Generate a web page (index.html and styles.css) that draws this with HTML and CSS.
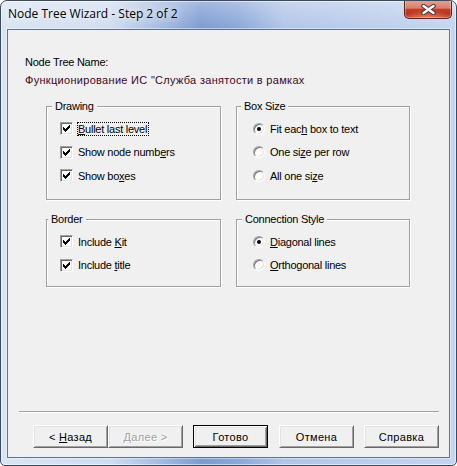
FILE: index.html
```html
<!DOCTYPE html>
<html>
<head>
<meta charset="utf-8">
<link rel="stylesheet" href="styles.css">
</head>
<body>
<div class="window">
  <div class="titlebar">
    <span class="title">Node Tree Wizard - Step 2 of 2</span>
    <div class="close">
      <svg width="15" height="11" viewBox="0 0 15 11">
        <path d="M2.5 2 L12.5 9 M12.5 2 L2.5 9" stroke="#3b3b3b" stroke-width="4.4" stroke-linecap="round" fill="none"/>
        <path d="M2.5 2 L12.5 9 M12.5 2 L2.5 9" stroke="#ffffff" stroke-width="2.4" stroke-linecap="round" fill="none"/>
      </svg>
    </div>
  </div>
  <div class="client">
    <div class="name-block">
      <div class="line">Node Tree Name:</div>
      <div class="line name-value cyr">Функционирование ИС "Служба занятости в рамках</div>
    </div>

    <div class="groups">
      <div class="group">
        <div class="legend lg-drawing">Drawing</div>
        <div class="opts">
          <div class="opt"><span class="cb"><svg width="11" height="11" viewBox="0 0 11 11"><path class="tick" d="M2 4 L3 4 L3 5 L4 5 L4 6 L5 6 L5 5 L6 5 L6 4 L7 4 L7 3 L8 3 L8 2 L9 2 L9 5 L8 5 L8 6 L7 6 L7 7 L6 7 L6 8 L5 8 L5 9 L4 9 L4 8 L3 8 L3 7 L2 7 Z"/></svg></span><span class="txt focus"><u>B</u>ullet last level</span></div>
          <div class="opt"><span class="cb"><svg width="11" height="11" viewBox="0 0 11 11"><path class="tick" d="M2 4 L3 4 L3 5 L4 5 L4 6 L5 6 L5 5 L6 5 L6 4 L7 4 L7 3 L8 3 L8 2 L9 2 L9 5 L8 5 L8 6 L7 6 L7 7 L6 7 L6 8 L5 8 L5 9 L4 9 L4 8 L3 8 L3 7 L2 7 Z"/></svg></span><span class="txt">Show node numb<u>e</u>rs</span></div>
          <div class="opt"><span class="cb"><svg width="11" height="11" viewBox="0 0 11 11"><path class="tick" d="M2 4 L3 4 L3 5 L4 5 L4 6 L5 6 L5 5 L6 5 L6 4 L7 4 L7 3 L8 3 L8 2 L9 2 L9 5 L8 5 L8 6 L7 6 L7 7 L6 7 L6 8 L5 8 L5 9 L4 9 L4 8 L3 8 L3 7 L2 7 Z"/></svg></span><span class="txt">Show bo<u>x</u>es</span></div>
        </div>
      </div>

      <div class="group radios">
        <div class="legend lg-box">Box Size</div>
        <div class="opts">
          <div class="opt"><span class="rb on"></span><span class="txt">Fit eac<u>h</u> box to text</span></div>
          <div class="opt"><span class="rb"></span><span class="txt">One si<u>z</u>e per row</span></div>
          <div class="opt"><span class="rb"></span><span class="txt">All one si<u>z</u>e</span></div>
        </div>
      </div>

      <div class="group">
        <div class="legend lg-border">Border</div>
        <div class="opts">
          <div class="opt"><span class="cb"><svg width="11" height="11" viewBox="0 0 11 11"><path class="tick" d="M2 4 L3 4 L3 5 L4 5 L4 6 L5 6 L5 5 L6 5 L6 4 L7 4 L7 3 L8 3 L8 2 L9 2 L9 5 L8 5 L8 6 L7 6 L7 7 L6 7 L6 8 L5 8 L5 9 L4 9 L4 8 L3 8 L3 7 L2 7 Z"/></svg></span><span class="txt">Include <u>K</u>it</span></div>
          <div class="opt"><span class="cb"><svg width="11" height="11" viewBox="0 0 11 11"><path class="tick" d="M2 4 L3 4 L3 5 L4 5 L4 6 L5 6 L5 5 L6 5 L6 4 L7 4 L7 3 L8 3 L8 2 L9 2 L9 5 L8 5 L8 6 L7 6 L7 7 L6 7 L6 8 L5 8 L5 9 L4 9 L4 8 L3 8 L3 7 L2 7 Z"/></svg></span><span class="txt">Include <u>t</u>itle</span></div>
        </div>
      </div>

      <div class="group radios">
        <div class="legend lg-conn">Connection Style</div>
        <div class="opts">
          <div class="opt"><span class="rb on"></span><span class="txt"><u>D</u>iagonal lines</span></div>
          <div class="opt"><span class="rb"></span><span class="txt"><u>O</u>rthogonal lines</span></div>
        </div>
      </div>
    </div>

    <div class="separator"></div>

    <div class="buttons cyr">
      <div class="btn">&lt;&nbsp;<u>Н</u>азад</div>
      <div class="btn disabled"><u>Д</u>алее&nbsp;&gt;</div>
      <div class="btn default gap-a">Готово</div>
      <div class="btn gap-b">Отмена</div>
      <div class="btn gap-a">Справка</div>
    </div>
  </div>
</div>
</body>
</html>
```

FILE: styles.css
```css
html, body {
  margin: 0;
  padding: 0;
  background: #ffffff;
}

.window {
  box-sizing: border-box;
  width: 457px;
  height: 466px;
  border: 1px solid #3a4a60;
  border-radius: 7px 7px 5px 5px;
  background:
    linear-gradient(180deg, rgba(255,255,255,0.3) 0px, rgba(255,255,255,0) 28px),
    linear-gradient(90deg, #d9e4f3 0%, #d0ddf0 24%, #a0b8e0 36%, #7d9bd0 44%, #8aa7d9 52%, #b0c5e7 62%, #bacdeb 80%, #c4d5ee 100%);
  box-shadow: inset 0 0 0 1px rgba(255,255,255,0.55);
  display: flex;
  flex-direction: column;
  overflow: hidden;
}

.titlebar {
  height: 28px;
  display: flex;
  align-items: flex-start;
  justify-content: space-between;
  flex-shrink: 0;
}

.title {
  margin-left: 7px;
  padding-top: 5px;
  font-family: "Open Sans", "Noto Sans", sans-serif;
  font-size: 12px;
  line-height: 16px;
  color: #000;
  text-shadow: 0 0 6px rgba(255,255,255,0.9), 0 0 12px rgba(255,255,255,0.8);
}

.close {
  box-sizing: border-box;
  width: 48px;
  height: 19px;
  margin-right: 4px;
  margin-top: -1px;
  border: 1px solid #5a231c;
  border-top: none;
  border-radius: 0 0 5px 5px;
  background:
    radial-gradient(ellipse 55% 45% at 50% 100%, rgba(255,150,110,0.7), rgba(255,150,110,0) 100%),
    linear-gradient(180deg, #e4a596 0%, #d5806e 45%, #c23e29 52%, #b8321c 75%, #c44630 100%);
  box-shadow: inset 0 0 0 1px rgba(255,255,255,0.3);
  display: flex;
  align-items: center;
  justify-content: center;
}

.close svg {
  display: block;
}

.client {
  box-sizing: border-box;
  margin: 0 6px 7px 6px;
  height: 429px;
  border: 1px solid #5f7189;
  background: #f0f0f0;
  box-shadow: 0 0 0 1px rgba(255,255,255,0.45);
  display: flex;
  flex-direction: column;
  font-family: "Liberation Sans", Arial, sans-serif;
  font-size: 11px;
  letter-spacing: -0.25px;
  color: #000;
}

.cyr {
  letter-spacing: 0.3px;
}

.name-block {
  padding: 23px 0 0 17px;
}

.line {
  line-height: 18px;
  white-space: nowrap;
}

.name-value {
  color: #42061c;
}

.groups {
  margin-top: 17px;
  padding-left: 38px;
  display: grid;
  grid-template-columns: 175px 174px;
  grid-template-rows: 94px 68px;
  column-gap: 15px;
  row-gap: 19px;
}

.group {
  box-sizing: border-box;
  border: 1px solid #a0a0a0;
  box-shadow: inset 1px 1px 0 #ffffff, 1px 1px 0 #ffffff;
  padding-left: 13px;
}

.group.radios {
  padding-left: 16px;
}

.legend {
  display: table;
  margin-top: -7px;
  padding: 0 3px;
  line-height: 13px;
  background: #f0f0f0;
  white-space: nowrap;
}

.lg-drawing { margin-left: -8px; }
.lg-border { margin-left: -12px; }
.lg-box { margin-left: -12px; }
.lg-conn { margin-left: -11px; }

.opts {
  padding-top: 4px;
}

.opt {
  height: 23.5px;
  display: flex;
  align-items: center;
}

.cb {
  box-sizing: border-box;
  width: 13px;
  height: 13px;
  flex-shrink: 0;
  border: 1px solid;
  border-color: #a0a0a0 #ffffff #ffffff #a0a0a0;
  box-shadow: inset 1px 1px 0 #696969, inset -1px -1px 0 #e3e3e3;
  background: #fff;
}

.cb svg {
  display: block;
}

.tick {
  fill: #000;
  shape-rendering: crispEdges;
}

.rb {
  box-sizing: border-box;
  width: 12px;
  height: 12px;
  flex-shrink: 0;
  border-radius: 50%;
  border: 1px solid;
  border-color: #a0a0a0 #ffffff #ffffff #a0a0a0;
  box-shadow: inset 1px 1px 0 #7a7a7a, inset -1px -1px 0 #e3e3e3;
  background: #fff;
  display: flex;
  align-items: center;
  justify-content: center;
}

.rb.on::after {
  content: "";
  width: 4px;
  height: 4px;
  border-radius: 50%;
  background: #000;
}

.txt {
  margin-left: 4px;
  border: 1px solid transparent;
  line-height: 12px;
  white-space: nowrap;
}

.txt.focus {
  border: 1px dotted #000;
  padding: 0 1px 0 0;
}

.separator {
  margin: auto 10px 0 11px;
  border-top: 1px solid #a0a0a0;
  border-bottom: 1px solid #ffffff;
  height: 0;
}

.buttons {
  margin-top: 12px;
  padding: 0 0 9px 25px;
  display: flex;
}

.btn {
  box-sizing: border-box;
  width: 75px;
  height: 23px;
  border: 1px solid;
  border-color: #ffffff #696969 #696969 #ffffff;
  box-shadow: inset 1px 1px 0 #e3e3e3, inset -1px -1px 0 #a0a0a0;
  background: #f0f0f0;
  display: flex;
  align-items: center;
  justify-content: center;
  white-space: nowrap;
}

.btn.disabled {
  color: #a0a0a0;
  text-shadow: 1px 1px 0 #ffffff;
}

.btn.default {
  border-color: #000;
  box-shadow: inset 1px 1px 0 #ffffff, inset -1px -1px 0 #696969, inset 2px 2px 0 #e3e3e3, inset -2px -2px 0 #a0a0a0;
}

.gap-a { margin-left: 10px; }
.gap-b { margin-left: 11px; }
```
